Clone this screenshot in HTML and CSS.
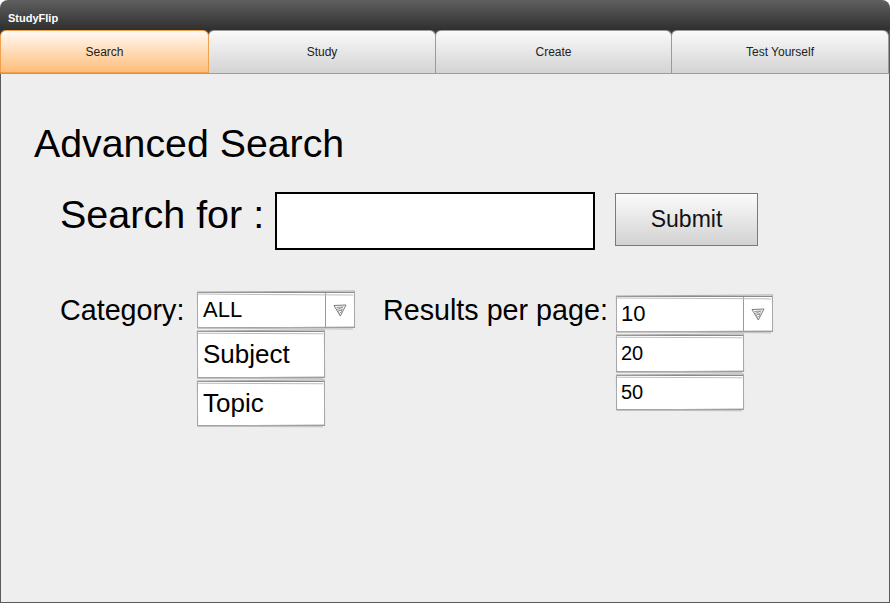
FILE: index.html
```html
<!DOCTYPE html>
<html>
<head>
<meta charset="utf-8">
<title>StudyFlip</title>
<link rel="stylesheet" href="styles.css">
</head>
<body>
<div class="window">
  <div class="titlebar">StudyFlip</div>
  <div class="tabs">
    <div class="tab tab-search active">Search</div>
    <div class="tab tab-study">Study</div>
    <div class="tab tab-create">Create</div>
    <div class="tab tab-test">Test Yourself</div>
  </div>
  <div class="content">
    <h1 class="title">Advanced Search</h1>
    <div class="search-row">
      <label class="search-label">Search for :</label>
      <div class="search-input"></div>
      <div class="submit">Submit</div>
    </div>
    <div class="filter-row">
      <div class="filter-label cat-label">Category:</div>
      <div class="list cat-list">
        <div class="sketch dropdown">
          <span class="dd-text t22">ALL</span>
          <span class="dd-arrow">
            <svg width="16" height="16" viewBox="0 0 16 16"><path d="M2 3.5 L14 3 L8.3 14 Z" fill="none" stroke="#7a7a7a" stroke-width="1"/><path d="M4.5 5.5 L10.5 5 M5 7.5 L11.5 4.8 M6 9.5 L11 6.8 M6.5 8 L10 8.5 M7 11.5 L10 9.5" fill="none" stroke="#8a8a8a" stroke-width="0.9"/></svg>
          </span>
        </div>
        <div class="sketch item item-subject t26">Subject</div>
        <div class="sketch item item-topic t26">Topic</div>
      </div>
      <div class="filter-label res-label">Results per page:</div>
      <div class="list res-list">
        <div class="sketch dropdown">
          <span class="dd-text t22 pad4">10</span>
          <span class="dd-arrow">
            <svg width="16" height="16" viewBox="0 0 16 16"><path d="M2 3.5 L14 3 L8.3 14 Z" fill="none" stroke="#7a7a7a" stroke-width="1"/><path d="M4.5 5.5 L10.5 5 M5 7.5 L11.5 4.8 M6 9.5 L11 6.8 M6.5 8 L10 8.5 M7 11.5 L10 9.5" fill="none" stroke="#8a8a8a" stroke-width="0.9"/></svg>
          </span>
        </div>
        <div class="sketch item item-20 t20 pad4">20</div>
        <div class="sketch item item-50 t20 pad4">50</div>
      </div>
    </div>
  </div>
</div>
</body>
</html>
```

FILE: styles.css
```css
* { box-sizing: border-box; }
html, body { margin: 0; padding: 0; background: #ffffff; }
body { font-family: "Liberation Sans", Arial, sans-serif; color: #000; }

.window {
  width: 890px;
  height: 603px;
  display: flex;
  flex-direction: column;
}

.titlebar {
  height: 30px;
  border-radius: 8px 8px 0 0;
  background: linear-gradient(#5f5f5f, #2f2f2f);
  color: #ffffff;
  font-weight: bold;
  font-size: 11px;
  line-height: 24px;
  padding: 6px 0 0 8px;
}

.tabs {
  display: flex;
  height: 44px;
  background: #3a3a3a;
  border-bottom: 1px solid #9c9c9c;
  border-right: 1px solid #5a5a5a;
}
.tab {
  height: 43px;
  display: flex;
  align-items: center;
  justify-content: center;
  font-size: 12px;
  color: #222;
  border: 1px solid #9a9a9a;
  border-bottom: none;
  border-radius: 6px 6px 0 0;
  background: linear-gradient(#fafafa, #d3d3d3);
}
.tab + .tab { margin-left: -1px; }
.tab-search { width: 209px; }
.tab-study { width: 228px; }
.tab-create { width: 237px; }
.tab-test { flex: 1; }
.tab.active {
  border-color: #f3a04c;
  border-bottom: 1px solid #f3a04c;
  background: linear-gradient(#fffaf4, #ffbd7a);
  position: relative;
  z-index: 1;
}

.content {
  flex: 1;
  background: #eeeeee;
  border: 1px solid #5a5a5a;
  border-top: none;
}

.title {
  margin: 47px 0 0 33px;
  font-size: 39.3px;
  line-height: 45px;
  font-weight: normal;
}

.search-row {
  display: flex;
  align-items: flex-start;
  margin-top: 26px;
  padding-left: 59px;
}
.search-label {
  width: 215px;
  font-size: 39.5px;
  line-height: 44px;
  margin-top: 0;
}
.search-input {
  width: 320px;
  height: 58px;
  background: #ffffff;
  border: 2px solid #000000;
}
.submit {
  width: 143px;
  height: 53px;
  margin: 1px 0 0 20px;
  border: 1px solid #7a7a7a;
  background: linear-gradient(#fbfbfb, #d2d2d2);
  display: flex;
  align-items: center;
  justify-content: center;
  font-size: 23px;
  color: #111;
}

.filter-row {
  display: flex;
  align-items: flex-start;
  margin-top: 42px;
  padding-left: 59px;
}
.filter-label {
  font-size: 28.7px;
  line-height: 32px;
  margin-top: 2px;
}
.cat-label { width: 137px; }
.res-label { width: 233px; margin-left: 28px; }

.list {
  display: flex;
  flex-direction: column;
  gap: 3px;
}
.cat-list { width: 158px; }
.res-list { width: 157px; margin-top: 4px; }

.sketch {
  position: relative;
  background: #ffffff;
  border: 1px solid #8a8a8a;
}
.sketch::before {
  content: "";
  position: absolute;
  top: -2px; left: -1px; right: -1px; bottom: -1px;
  border: 1px solid #ababab;
  transform: rotate(-0.4deg);
  pointer-events: none;
}
.sketch::after {
  content: "";
  position: absolute;
  top: 1px; left: 0; right: 1px; bottom: -2px;
  border-top: 1px solid #bdbdbd;
  border-bottom: 1px solid #bdbdbd;
  transform: rotate(0.3deg);
  pointer-events: none;
}

.dropdown {
  height: 36px;
  display: flex;
  align-items: stretch;
}
.dd-text {
  flex: 1;
  display: flex;
  align-items: center;
  padding-left: 5px;
}
.dd-arrow {
  width: 29px;
  border-left: 1px solid #9a9a9a;
  display: flex;
  align-items: center;
  justify-content: center;
}

.item {
  width: 128px;
  display: flex;
  align-items: center;
  padding-left: 5px;
}
.item-subject { height: 47px; }
.item-topic { height: 45px; }
.item-20 { height: 37px; }
.item-50 { height: 35px; }

.t20 { font-size: 20px; }
.t22 { font-size: 22px; }
.t26 { font-size: 26px; }
.pad4 { padding-left: 4px; }
```
